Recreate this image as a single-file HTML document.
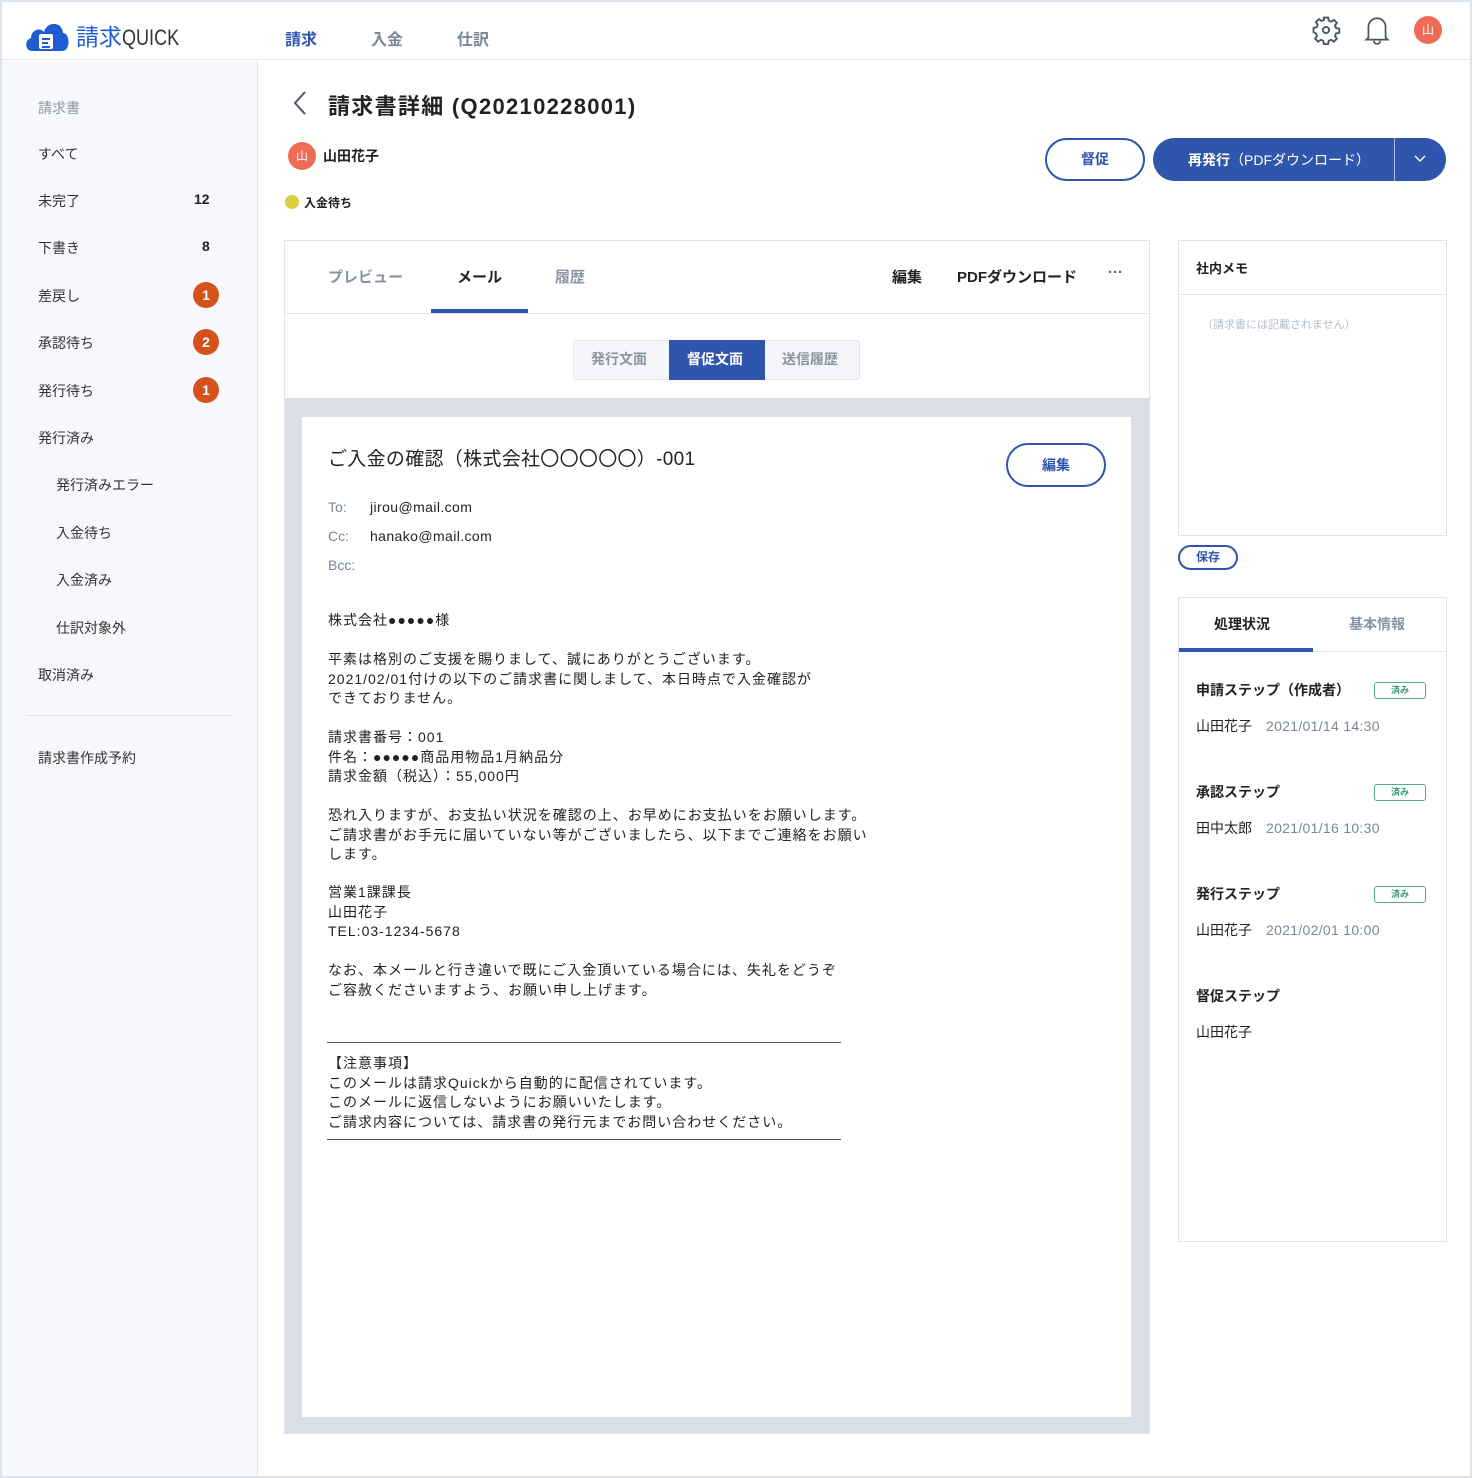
<!DOCTYPE html>
<html><head><meta charset="utf-8"><style>
*{box-sizing:border-box;margin:0;padding:0}
body{width:1472px;height:1478px;background:#dde3ec;font-family:"Liberation Sans","Noto Sans CJK JP",sans-serif;color:#222;position:relative;overflow:hidden;font-size:14px}
.a{position:absolute;white-space:nowrap}
#page{position:absolute;left:2px;top:2px;width:1468px;height:1474px;background:#fff}
.hdr{position:absolute;left:0;top:0;width:1468px;height:58px;border-bottom:1px solid #e3e7ee;background:#fff}
.side{position:absolute;left:0;top:59px;width:256px;height:1415px;background:#f7f8fc;border-right:1px solid #e3e7ee}
.nav{font-size:14px;color:#333}
.badge{width:26px;height:26px;border-radius:13px;background:#d4521b;color:#fff;font-weight:bold;font-size:14px;text-align:center;line-height:26px}
.b{font-weight:bold}
.body{font-size:14px;line-height:19.5px;color:#222;letter-spacing:1px}
.g{color:#7b8796}
.done{width:52px;height:17px;border:1px solid #5aa88e;border-radius:3px;color:#3a9a7a;font-size:9px;text-align:center;line-height:15px;font-weight:bold}
</style></head><body>
<div id="page">
<div class="hdr">
 <svg class="a" style="left:22px;top:16px" width="46" height="34" viewBox="0 0 46 34"><path d="M8 33 C1 33 0 22 7 20 C7 12 16 9 20 14 C23 3 38 3 39 15 C46 15 47 33 38 33 Z" fill="#1f5bd3"/><rect x="15" y="16" width="14" height="15" rx="2" fill="#fff"/><rect x="18" y="20" width="8" height="2" fill="#1f5bd3"/><rect x="18" y="24" width="6" height="2" fill="#1f5bd3"/><rect x="18" y="28" width="8" height="2" fill="#1f5bd3"/></svg>
 <div class="a" style="left:74px;top:16px;font-size:23px;color:#1f5bd3">請求<span style="color:#333;font-size:22px;display:inline-block;transform:scaleX(0.82);transform-origin:left">QUICK</span></div>
 <div class="a b" style="left:283px;top:24px;font-size:16px;color:#2f55ac">請求</div>
 <div class="a b" style="left:369px;top:24px;font-size:16px;color:#7b8796">入金</div>
 <div class="a b" style="left:455px;top:24px;font-size:16px;color:#7b8796">仕訳</div>
 <svg class="a" style="left:1309px;top:13px" width="30" height="30" viewBox="0 0 24 24" fill="none" stroke="#4a5462" stroke-width="1.5"><path d="M10.3 2h3.4l.5 2.6 1.9.8 2.2-1.5 2.4 2.4-1.5 2.2.8 1.9 2.6.5v3.4l-2.6.5-.8 1.9 1.5 2.2-2.4 2.4-2.2-1.5-1.9.8-.5 2.6h-3.4l-.5-2.6-1.9-.8-2.2 1.5-2.4-2.4 1.5-2.2-.8-1.9L2 13.7v-3.4l2.6-.5.8-1.9-1.5-2.2 2.4-2.4 2.2 1.5 1.9-.8z"/><circle cx="12" cy="12" r="2.5"/></svg>
 <svg class="a" style="left:1362px;top:13px" width="26" height="30" viewBox="0 0 24 28" fill="none" stroke="#4a5462" stroke-width="1.6"><path d="M4 21V11a8 8 0 0 1 16 0v10l2 2H2z"/><path d="M9 24a3 3 0 0 0 6 0"/></svg>
 <div class="a" style="left:1412px;top:14px;width:28px;height:28px;border-radius:14px;background:#ee6c55;color:#fff;font-size:12px;text-align:center;line-height:28px">山</div>
</div>
<div class="side">
 <div class="a nav" style="left:36px;top:37px;color:#8a94a2">請求書</div>
 <div class="a nav" style="left:36px;top:83px">すべて</div>
 <div class="a nav" style="left:36px;top:130px">未完了</div><div class="a b" style="left:192px;top:130px">12</div>
 <div class="a nav" style="left:36px;top:177px">下書き</div><div class="a b" style="left:200px;top:177px">8</div>
 <div class="a nav" style="left:36px;top:225px">差戻し</div><div class="a badge" style="left:191px;top:221px">1</div>
 <div class="a nav" style="left:36px;top:272px">承認待ち</div><div class="a badge" style="left:191px;top:268px">2</div>
 <div class="a nav" style="left:36px;top:320px">発行待ち</div><div class="a badge" style="left:191px;top:316px">1</div>
 <div class="a nav" style="left:36px;top:367px">発行済み</div>
 <div class="a nav" style="left:54px;top:414px">発行済みエラー</div>
 <div class="a nav" style="left:54px;top:462px">入金待ち</div>
 <div class="a nav" style="left:54px;top:509px">入金済み</div>
 <div class="a nav" style="left:54px;top:557px">仕訳対象外</div>
 <div class="a nav" style="left:36px;top:604px">取消済み</div>
 <div class="a" style="left:24px;top:654px;width:206px;height:1px;background:#dfe3ea"></div>
 <div class="a nav" style="left:36px;top:687px">請求書作成予約</div>
</div>
<svg class="a" style="left:288px;top:88px" width="20" height="26" viewBox="0 0 20 26" fill="none" stroke="#4a5462" stroke-width="2"><path d="M15 2L5 13l10 11"/></svg>
<div class="a b" style="left:326px;top:87px;font-size:22px;color:#222;letter-spacing:1.3px">請求書詳細 (Q20210228001)</div>
<div class="a" style="left:286px;top:140px;width:28px;height:28px;border-radius:14px;background:#ee6c55;color:#fff;font-size:12px;text-align:center;line-height:28px">山</div>
<div class="a b" style="left:321px;top:144px;font-size:14px">山田花子</div>
<div class="a" style="left:283px;top:193px;width:14px;height:14px;border-radius:7px;background:#d9cf3c"></div>
<div class="a b" style="left:302px;top:192px;font-size:12px">入金待ち</div>
<div class="a b" style="left:1043px;top:136px;width:100px;height:43px;border:2px solid #2f55ac;border-radius:22px;color:#2f55ac;text-align:center;line-height:39px">督促</div>
<div class="a" style="left:1151px;top:136px;width:293px;height:43px;border-radius:22px;background:#2f55ac;color:#fff"></div>
<div class="a" style="left:1186px;top:148px;color:#fff;font-size:14px"><b>再発行</b>（PDFダウンロード）</div>
<div class="a" style="left:1392px;top:136px;width:1px;height:43px;background:#aebbe0"></div>
<svg class="a" style="left:1411px;top:152px" width="14" height="10" viewBox="0 0 14 10" fill="none" stroke="#fff" stroke-width="1.4"><path d="M2 2l5 5 5-5"/></svg>
<div class="a" style="left:282px;top:238px;width:866px;height:1194px;border:1px solid #e0e4eb;background:#d9dee7"></div>
<div class="a" style="left:283px;top:239px;width:864px;height:157px;background:#fff"></div>
<div class="a" style="left:283px;top:311px;width:864px;height:1px;background:#e3e7ee"></div>
<div class="a b" style="left:326px;top:264px;font-size:15px;color:#8a94a2">プレビュー</div>
<div class="a b" style="left:455px;top:264px;font-size:15px">メール</div>
<div class="a" style="left:429px;top:307px;width:97px;height:4px;background:#2f55ac"></div>
<div class="a b" style="left:553px;top:264px;font-size:15px;color:#8a94a2">履歴</div>
<div class="a b" style="left:890px;top:264px;font-size:15px">編集</div>
<div class="a b" style="left:955px;top:264px;font-size:15px">PDFダウンロード</div>
<div class="a b" style="left:1106px;top:262px;font-size:15px;color:#666">···</div>
<div class="a" style="left:571px;top:338px;width:287px;height:40px;border:1px solid #e0e4eb;border-radius:3px;background:#f4f6f9"></div>
<div class="a b" style="left:589px;top:347px;font-size:14px;color:#8a94a2">発行文面</div>
<div class="a" style="left:667px;top:338px;width:96px;height:40px;background:#2f55ac"></div>
<div class="a b" style="left:685px;top:347px;font-size:14px;color:#fff">督促文面</div>
<div class="a b" style="left:780px;top:347px;font-size:14px;color:#8a94a2">送信履歴</div>
<div class="a" style="left:300px;top:415px;width:829px;height:1000px;background:#fff"></div>
<div class="a" style="left:326px;top:442px;font-size:19px;letter-spacing:0.3px">ご入金の確認（株式会社〇〇〇〇〇）-001</div>
<div class="a b" style="left:1004px;top:441px;width:100px;height:44px;border:2px solid #2f55ac;border-radius:22px;color:#2f55ac;text-align:center;line-height:40px">編集</div>
<div class="a g" style="left:326px;top:497px">To:</div><div class="a" style="left:368px;top:497px;letter-spacing:0.4px">jirou@mail.com</div>
<div class="a g" style="left:326px;top:526px">Cc:</div><div class="a" style="left:368px;top:526px;letter-spacing:0.4px">hanako@mail.com</div>
<div class="a g" style="left:326px;top:555px">Bcc:</div>
<div class="a body" style="left:326px;top:609px">株式会社●●●●●様</div>
<div class="a body" style="left:326px;top:648px">平素は格別のご支援を賜りまして、誠にありがとうございます。<br>2021/02/01付けの以下のご請求書に関しまして、本日時点で入金確認が<br>できておりません。</div>
<div class="a body" style="left:326px;top:726px">請求書番号：001<br>件名：●●●●●商品用物品1月納品分<br>請求金額（税込）：55,000円</div>
<div class="a body" style="left:326px;top:804px">恐れ入りますが、お支払い状況を確認の上、お早めにお支払いをお願いします。<br>ご請求書がお手元に届いていない等がございましたら、以下までご連絡をお願い<br>します。</div>
<div class="a body" style="left:326px;top:881px">営業1課課長<br>山田花子<br>TEL:03-1234-5678</div>
<div class="a body" style="left:326px;top:959px">なお、本メールと行き違いで既にご入金頂いている場合には、失礼をどうぞ<br>ご容赦くださいますよう、お願い申し上げます。</div>
<div class="a" style="left:325px;top:1040px;width:514px;height:1px;background:#555"></div>
<div class="a body" style="left:326px;top:1052px">【注意事項】<br>このメールは請求Quickから自動的に配信されています。<br>このメールに返信しないようにお願いいたします。<br>ご請求内容については、請求書の発行元までお問い合わせください。</div>
<div class="a" style="left:325px;top:1137px;width:514px;height:1px;background:#555"></div>
<div class="a" style="left:1176px;top:238px;width:269px;height:296px;border:1px solid #e0e4eb"></div>
<div class="a" style="left:1177px;top:292px;width:267px;height:1px;background:#e3e7ee"></div>
<div class="a b" style="left:1194px;top:256px;font-size:13px">社内メモ</div>
<div class="a" style="left:1200px;top:314px;font-size:11px;color:#b5bcc7">（請求書には記載されません）</div>
<div class="a b" style="left:1176px;top:543px;width:60px;height:25px;border:2px solid #2f55ac;border-radius:13px;color:#2f55ac;text-align:center;line-height:21px;font-size:12px">保存</div>
<div class="a" style="left:1176px;top:595px;width:269px;height:645px;border:1px solid #e0e4eb"></div>
<div class="a" style="left:1177px;top:649px;width:267px;height:1px;background:#e3e7ee"></div>
<div class="a" style="left:1177px;top:646px;width:134px;height:4px;background:#2f55ac"></div>
<div class="a b" style="left:1212px;top:612px;font-size:14px">処理状況</div>
<div class="a b" style="left:1347px;top:612px;font-size:14px;color:#8a94a2">基本情報</div>
<div class="a b" style="left:1194px;top:678px">申請ステップ（作成者）</div><div class="a done" style="left:1372px;top:680px">済み</div>
<div class="a" style="left:1194px;top:714px">山田花子　<span class="g" style="letter-spacing:0.3px">2021/01/14 14:30</span></div>
<div class="a b" style="left:1194px;top:780px">承認ステップ</div><div class="a done" style="left:1372px;top:782px">済み</div>
<div class="a" style="left:1194px;top:816px">田中太郎　<span class="g" style="letter-spacing:0.3px">2021/01/16 10:30</span></div>
<div class="a b" style="left:1194px;top:882px">発行ステップ</div><div class="a done" style="left:1372px;top:884px">済み</div>
<div class="a" style="left:1194px;top:918px">山田花子　<span class="g" style="letter-spacing:0.3px">2021/02/01 10:00</span></div>
<div class="a b" style="left:1194px;top:984px">督促ステップ</div>
<div class="a" style="left:1194px;top:1020px">山田花子</div>
</div>
</body></html>
